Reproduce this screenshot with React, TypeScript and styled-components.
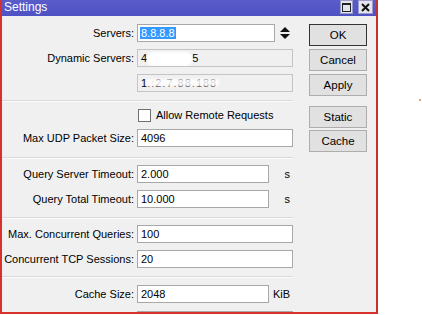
import styled, { createGlobalStyle } from 'styled-components';

const GlobalStyle = createGlobalStyle`
  html, body {
    margin: 0;
    padding: 0;
    background: #ffffff;
  }
  body {
    font-family: "Liberation Sans", Arial, sans-serif;
    font-size: 11px;
    color: #000;
  }
`;

const Page = styled.div`
  position: relative;
  width: 422px;
  height: 315px;
  overflow: hidden;
`;

const Window = styled.div`
  width: 374px;
  height: 312px;
  border-left: 2px solid #d8302c;
  border-right: 2px solid #c8302c;
  border-bottom: 2px solid #d8302c;
  background: #f0f0f0;
  display: flex;
  flex-direction: column;
  overflow: hidden;
`;

const TitleBar = styled.div`
  height: 16px;
  flex: none;
  background: linear-gradient(#5a5ccc, #4f52c4);
  display: flex;
  align-items: flex-start;
  justify-content: space-between;
  padding-left: 2px;
  padding-right: 3px;
`;

const TitleText = styled.span`
  color: #fff;
  font-size: 12px;
  line-height: 15px;
`;

const TitleButtons = styled.div`
  display: flex;
  gap: 5px;
`;

const TitleButton = styled.div<{ $wide?: boolean }>`
  width: ${(p) => (p.$wide ? 13 : 11)}px;
  height: 12px;
  background: #e4e4ee;
  border: 1px solid #9a9acb;
  display: flex;
  align-items: center;
  justify-content: center;
`;

const Body = styled.div`
  display: flex;
  align-items: flex-start;
  padding-top: 8px;
`;

const FormColumn = styled.div`
  width: 291px;
  flex: none;
  display: flex;
  flex-direction: column;
`;

const Section = styled.div<{ $top: number; $bottom: number; $gap?: number }>`
  display: flex;
  flex-direction: column;
  gap: ${(p) => p.$gap ?? 7}px;
  padding-top: ${(p) => p.$top}px;
  padding-bottom: ${(p) => p.$bottom}px;
`;

const Separator = styled.div`
  height: 1px;
  background: #d9d9d9;
  border-bottom: 1px solid #fbfbfb;
`;

const Row = styled.div`
  display: flex;
  align-items: center;
  height: 18px;
`;

const Label = styled.div`
  width: 132px;
  flex: none;
  display: flex;
  justify-content: flex-end;
  white-space: nowrap;
  margin-right: 3px;
`;

const Field = styled.div<{ $width: number; $disabled?: boolean }>`
  box-sizing: border-box;
  width: ${(p) => p.$width}px;
  height: 18px;
  flex: none;
  background: ${(p) => (p.$disabled ? '#f0f0f0' : '#ffffff')};
  border: 1px solid ${(p) => (p.$disabled ? '#c4c4c4' : '#a8a8a8')};
  padding-left: 3px;
  line-height: 16px;
  white-space: nowrap;
  overflow: hidden;
`;

const Selected = styled.span`
  background: #3399ff;
  color: #fff;
  padding: 0 1px;
  margin-left: -1px;
`;

const Smudge = styled.span<{ $width: number }>`
  display: inline-block;
  width: ${(p) => p.$width}px;
  height: 14px;
  vertical-align: middle;
  background: #ffffff;
  border-radius: 6px;
  filter: blur(1px);
`;

const Faint = styled.span`
  color: #333;
  letter-spacing: 1px;
  position: relative;
  &::after {
    content: '';
    position: absolute;
    left: -1px;
    right: -2px;
    top: 2px;
    bottom: 3px;
    background: rgba(255, 255, 255, 0.82);
    filter: blur(1px);
  }
`;

const Unit = styled.div`
  width: 21px;
  flex: none;
  text-align: right;
`;

const Spinner = styled.div`
  margin-left: 5px;
  display: flex;
  align-items: center;
`;

const CheckRow = styled.label`
  display: flex;
  align-items: center;
  height: 14px;
  padding-left: 136px;
  gap: 5px;
`;

const CheckBox = styled.span`
  box-sizing: border-box;
  width: 13px;
  height: 13px;
  background: #fff;
  border: 1px solid #707070;
`;

const ButtonColumn = styled.div`
  margin-left: 16px;
  width: 58px;
  display: flex;
  flex-direction: column;
`;

const ButtonGroup = styled.div<{ $gap: number }>`
  display: flex;
  flex-direction: column;
  gap: ${(p) => p.$gap}px;
  margin-bottom: 10px;
`;

const Button = styled.button<{ $default?: boolean }>`
  box-sizing: border-box;
  height: 22px;
  width: 58px;
  padding: 0;
  background: #e1e1e1;
  border: 1px solid ${(p) => (p.$default ? '#333333' : '#adadad')};
  font-family: "Liberation Sans", Arial, sans-serif;
  font-size: 11.5px;
  color: #000;
`;

const Dot = styled.div`
  position: absolute;
  left: 419px;
  top: 99px;
  width: 2px;
  height: 2px;
  background: #e8a070;
`;

export default function App() {
  return (
    <>
      <GlobalStyle />
      <Page>
        <Window>
          <TitleBar>
            <TitleText>Settings</TitleText>
            <TitleButtons>
              <TitleButton>
                <svg width="9" height="9" viewBox="0 0 9 9">
                  <rect x="0.5" y="0.5" width="8" height="8" fill="none" stroke="#222" />
                  <line x1="0" y1="1.5" x2="9" y2="1.5" stroke="#222" />
                </svg>
              </TitleButton>
              <TitleButton $wide>
                <svg width="9" height="9" viewBox="0 0 9 9">
                  <path d="M1 1 L8 8 M8 1 L1 8" stroke="#111" strokeWidth="2" />
                </svg>
              </TitleButton>
            </TitleButtons>
          </TitleBar>
          <Body>
            <FormColumn>
              <Section $top={0} $bottom={8}>
                <Row>
                  <Label>Servers:</Label>
                  <Field $width={138}>
                    <Selected>8.8.8.8</Selected>
                  </Field>
                  <Spinner>
                    <svg width="10" height="12" viewBox="0 0 10 12">
                      <path d="M5 0 L10 5 L0 5 Z" fill="#111" />
                      <path d="M0 7 L10 7 L5 12 Z" fill="#111" />
                    </svg>
                  </Spinner>
                </Row>
                <Row>
                  <Label>Dynamic Servers:</Label>
                  <Field $width={156} $disabled>
                    4<Smudge $width={45} />5
                  </Field>
                </Row>
                <Row>
                  <Label />
                  <Field $width={156} $disabled>
                    1<Faint>.:2.7.88.188</Faint>
                  </Field>
                </Row>
              </Section>
              <Separator />
              <Section $top={6} $bottom={10}>
                <CheckRow>
                  <CheckBox />
                  Allow Remote Requests
                </CheckRow>
                <Row>
                  <Label>Max UDP Packet Size:</Label>
                  <Field $width={156}>4096</Field>
                </Row>
              </Section>
              <Separator />
              <Section $top={6} $bottom={9}>
                <Row>
                  <Label>Query Server Timeout:</Label>
                  <Field $width={132}>2.000</Field>
                  <Unit>s</Unit>
                </Row>
                <Row>
                  <Label>Query Total Timeout:</Label>
                  <Field $width={132}>10.000</Field>
                  <Unit>s</Unit>
                </Row>
              </Section>
              <Separator />
              <Section $top={6} $bottom={8}>
                <Row>
                  <Label>Max. Concurrent Queries:</Label>
                  <Field $width={156}>100</Field>
                </Row>
                <Row>
                  <Label>Max. Concurrent TCP Sessions:</Label>
                  <Field $width={156}>20</Field>
                </Row>
              </Section>
              <Separator />
              <Section $top={7} $bottom={0} $gap={8}>
                <Row>
                  <Label>Cache Size:</Label>
                  <Field $width={132}>2048</Field>
                  <Unit>KiB</Unit>
                </Row>
                <Row>
                  <Label />
                  <Field $width={156} />
                </Row>
              </Section>
            </FormColumn>
            <ButtonColumn>
              <ButtonGroup $gap={3}>
                <Button $default>OK</Button>
                <Button>Cancel</Button>
                <Button>Apply</Button>
              </ButtonGroup>
              <ButtonGroup $gap={2}>
                <Button>Static</Button>
                <Button>Cache</Button>
              </ButtonGroup>
            </ButtonColumn>
          </Body>
        </Window>
        <Dot />
      </Page>
    </>
  );
}
